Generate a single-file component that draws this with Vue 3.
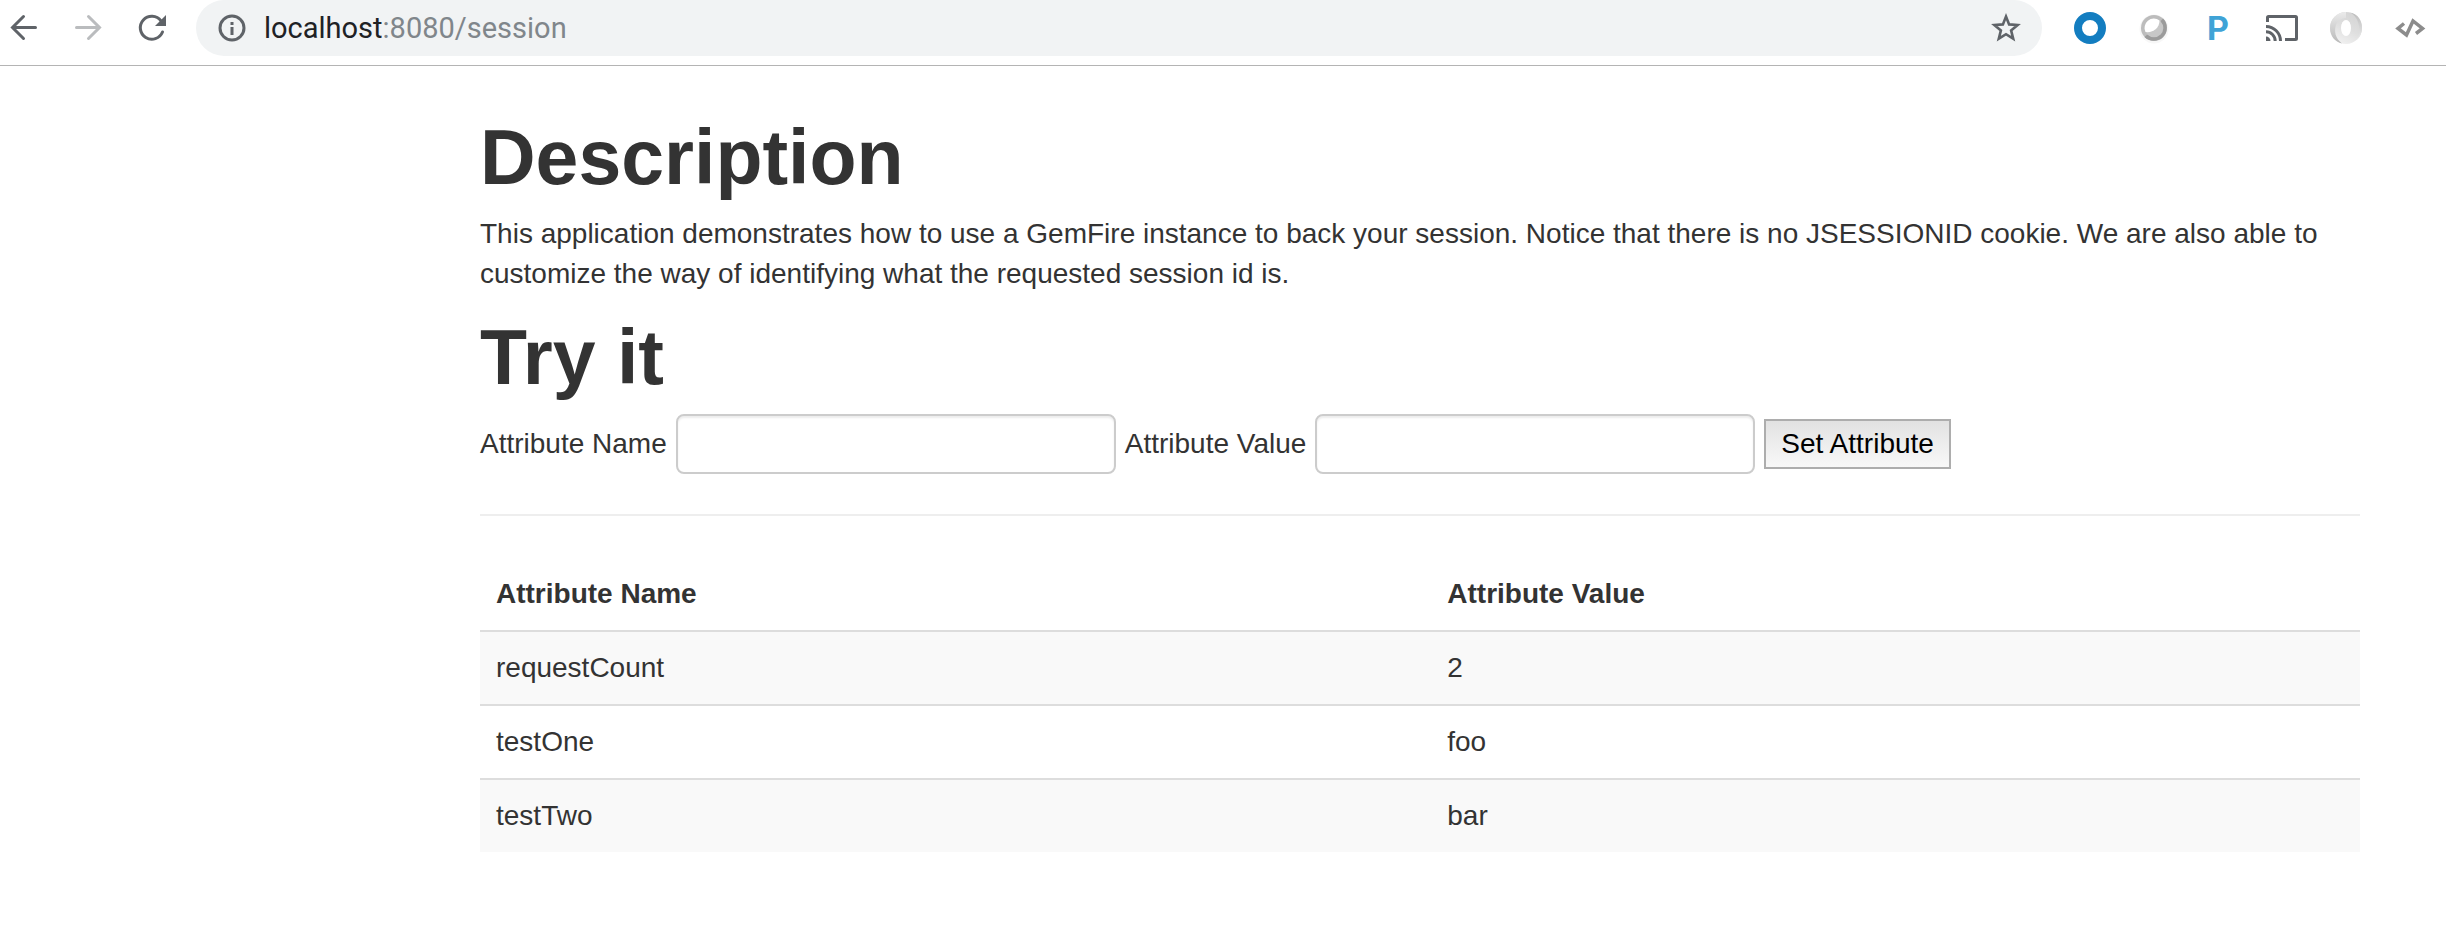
<script setup>
import { ref } from 'vue'

const attributeName = ref('')
const attributeValue = ref('')
const rows = ref([
  { name: 'requestCount', value: '2' },
  { name: 'testOne', value: 'foo' },
  { name: 'testTwo', value: 'bar' },
])

function setAttribute() {
  if (!attributeName.value) return
  rows.value.push({ name: attributeName.value, value: attributeValue.value })
  attributeName.value = ''
  attributeValue.value = ''
}
</script>

<template>
  <div class="browser">
    <header class="toolbar">
      <nav class="nav" aria-label="History">
        <button type="button" class="icon-button" aria-label="Back">
          <svg viewBox="0 0 32 32" fill="none" stroke="#5f6368" stroke-width="3" stroke-linecap="round"><path d="M27.500 15.500H5M15.500 4.500l-11 11 11 11" /></svg>
        </button>
        <button type="button" class="icon-button" aria-label="Forward">
          <svg viewBox="0 0 32 32" fill="none" stroke="#babcbe" stroke-width="3" stroke-linecap="round"><path d="M4.500 15.500H27M16.500 4.500l11 11-11 11" /></svg>
        </button>
        <button type="button" class="icon-button" aria-label="Reload">
          <svg viewBox="0 0 32 32"><path d="M25 8.800A11.500 11.500 0 1 0 26.500 20" fill="none" stroke="#5f6368" stroke-width="3" stroke-linecap="round" /><path d="M30 3v11H19z" fill="#5f6368" /></svg>
        </button>
      </nav>

      <div class="omnibox">
        <button type="button" class="icon-button" aria-label="View site information">
          <svg viewBox="0 0 32 32"><circle cx="16" cy="16" r="12" fill="none" stroke="#5f6368" stroke-width="3" /><path d="M14.500 15h3v8h-3zM14.500 10h3v3h-3z" fill="#5f6368" /></svg>
        </button>
        <div class="address"><span class="host">localhost</span>:8080/session</div>
        <button type="button" class="icon-button" aria-label="Bookmark this page">
          <svg viewBox="0 0 32 32"><path d="M16 4.500l3.100 7.900 8.500.6-6.500 5.400 2.100 8.300L16 22.200l-7.200 4.500 2.100-8.300L4.400 13l8.500-.6z" fill="none" stroke="#5f6368" stroke-width="2.600" /></svg>
        </button>
      </div>

      <div class="extensions">
        <button type="button" class="icon-button" aria-label="Blue ring extension">
          <svg viewBox="0 0 32 32"><circle cx="16" cy="16" r="12" fill="#fff" stroke="#137dc0" stroke-width="8" /></svg>
        </button>
        <button type="button" class="icon-button" aria-label="Orb extension">
          <svg viewBox="0 0 32 32">
            <circle cx="16" cy="17" r="14.500" fill="#f7f7f7" />
            <circle cx="16" cy="16" r="13" fill="#bcbcbc" />
            <path d="M25 6.500A13 13 0 0 1 6.500 25l2.800-2.500A9.400 9.400 0 0 0 22.500 9.300z" fill="#9b9b9b" />
            <circle cx="16" cy="16" r="9.300" fill="#c7c7c7" />
            <path d="M21.500 8.500A9.300 9.300 0 0 0 7.500 20C15 21 21.500 16 21.500 8.500z" fill="#fff" />
          </svg>
        </button>
        <button type="button" class="icon-button letter" aria-label="P extension">P</button>
        <button type="button" class="icon-button" aria-label="Cast">
          <svg viewBox="0 0 32 32" fill="none" stroke="#5f6368" stroke-width="3"><path d="M1.500 10V5.500q0-1 1-1h27q1 0 1 1v21q0 1-1 1H19" /><path d="M0 14.500A14.500 14.500 0 0 1 14.500 29M0 19.800A9.200 9.200 0 0 1 9.200 29" /><path d="M0 24.500A4.500 4.500 0 0 1 4.500 29H0z" fill="#5f6368" stroke="none" /></svg>
        </button>
        <button type="button" class="icon-button" aria-label="JSON extension">
          <svg viewBox="0 0 32 32">
            <defs>
              <linearGradient id="swirl-left" x1="0" y1="0" x2="0" y2="1"><stop offset="0" stop-color="#ebebeb" /><stop offset="1" stop-color="#b8b8b8" /></linearGradient>
              <linearGradient id="swirl-right" x1="0" y1="0" x2="0" y2="1"><stop offset="0" stop-color="#bcbcbc" /><stop offset="1" stop-color="#ebebeb" /></linearGradient>
              <linearGradient id="swirl-base" x1="0.800" y1="0" x2="0.300" y2="1"><stop offset="0" stop-color="#d4d4d4" /><stop offset="0.500" stop-color="#dedede" /><stop offset="1" stop-color="#f2f2f2" /></linearGradient>
            </defs>
            <circle cx="16" cy="16" r="16" fill="url(#swirl-base)" />
            <path d="M16 0C7 0 0 7 0 16c0 8 5 14 12 15.500C5 26 4 19 6 13 8 8 12 6 16 6z" fill="url(#swirl-left)" />
            <path d="M20 .5C28 2 32 8.500 32 16c0 5-2 9-5 12 2-4 3-8 2-14C28 8 25 3 20 .5z" fill="url(#swirl-right)" />
            <ellipse cx="16" cy="16" rx="5" ry="8" fill="#fff" />
          </svg>
        </button>
        <button type="button" class="icon-button" aria-label="Source code extension">
          <svg viewBox="0 0 32 32" fill="none" stroke="#8c8c8c" stroke-width="3.500"><path d="M10 11.500l-6 5 8.500 6.500 6.500-14 9.500 7.500-6.500 5" /></svg>
        </button>
      </div>
    </header>

    <main class="page">
      <h1>Description</h1>
      <p>
        This application demonstrates how to use a GemFire instance to back your session. Notice that there is no
        JSESSIONID cookie. We are also able to customize the way of identifying what the requested session id is.
      </p>

      <h1>Try it</h1>
      <form class="form" @submit.prevent="setAttribute">
        <label for="attributeName">Attribute Name</label>
        <input id="attributeName" v-model="attributeName" type="text" />
        <label for="attributeValue">Attribute Value</label>
        <input id="attributeValue" v-model="attributeValue" type="text" />
        <button type="submit" class="submit">Set Attribute</button>
      </form>

      <hr />

      <table>
        <thead>
          <tr>
            <th class="name-column" scope="col">Attribute Name</th>
            <th scope="col">Attribute Value</th>
          </tr>
        </thead>
        <tbody>
          <tr v-for="row in rows" :key="row.name">
            <td>{{ row.name }}</td>
            <td>{{ row.value }}</td>
          </tr>
        </tbody>
      </table>
    </main>
  </div>
</template>

<style>
body {
  margin: 0;
  background: #fff;
}
</style>

<style scoped>
.browser {
  color: #333;
  font-family: "Helvetica Neue", "Liberation Sans", Helvetica, Arial, sans-serif;
  font-size: 28px;
  line-height: 40px;
}

.toolbar {
  display: flex;
  align-items: flex-start;
  height: 65px;
  padding-left: 8px;
  padding-right: 20px;
  border-bottom: 1px solid #b4b4b4;
}

.nav,
.extensions {
  display: flex;
  align-items: center;
  gap: 32px;
  height: 56px;
}

.icon-button {
  display: block;
  flex: none;
  width: 32px;
  height: 32px;
  padding: 0;
  border: 0;
  background: none;
}

.icon-button svg {
  display: block;
  width: 32px;
  height: 32px;
}

.letter {
  color: #3fa3d6;
  font: bold 34px/32px Roboto, sans-serif;
}

.omnibox {
  display: flex;
  flex: 1;
  align-items: center;
  box-sizing: border-box;
  height: 56px;
  margin-left: 28px;
  margin-right: 32px;
  padding: 0 20px;
  border-radius: 28px;
  background: #f1f3f4;
}

.address {
  flex: 1;
  margin-left: 16px;
  color: #80868b;
  font-family: Roboto, sans-serif;
  font-size: 29px;
}

.host {
  color: #202124;
}

.page {
  margin-left: 480px;
  margin-right: 86px;
  padding-top: 51px;
}

h1 {
  margin: 0 0 17px;
  font-size: 77px;
  font-weight: bold;
  line-height: 80px;
}

p {
  margin: 0 0 23px;
}

.form {
  display: flex;
  flex-wrap: wrap;
  align-items: center;
  gap: 9px;
}

.form input {
  box-sizing: border-box;
  width: 440px;
  height: 60px;
  padding: 8px 12px;
  border: 2px solid #ccc;
  border-radius: 8px;
  background: #fff;
  box-shadow: inset 0 2px 2px rgba(0, 0, 0, 0.075);
  color: #555;
  font: inherit;
}

.submit {
  height: 50px;
  padding: 0 15px;
  border: 2px solid #adadad;
  border-radius: 0;
  background: linear-gradient(#e2e2e2, #f8f8f8);
  color: #000;
  font: inherit;
}

hr {
  height: 2px;
  margin: 40px 0 42px;
  border: 0;
  background: #eee;
}

table {
  width: 100%;
  border-collapse: separate;
  border-spacing: 0;
}

th,
td {
  padding: 16px;
  text-align: left;
}

.name-column {
  width: 50.6%;
}

td {
  border-top: 2px solid #ddd;
}

tbody tr:nth-child(odd) {
  background: #f9f9f9;
}
</style>
